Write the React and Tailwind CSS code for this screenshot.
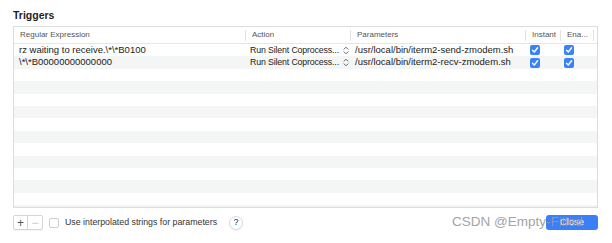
import React from 'react';

const cols = [
  { key: 'regex', label: 'Regular Expression', w: 'w-[232px]' },
  { key: 'action', label: 'Action', w: 'w-[105px]' },
  { key: 'params', label: 'Parameters', w: 'w-[175px]' },
  { key: 'instant', label: 'Instant', w: 'w-[35px]' },
  { key: 'enabled', label: 'Ena...', w: 'w-[33px]' },
];

const triggers = [
  {
    regex: 'rz waiting to receive.\\*\\*B0100',
    action: 'Run Silent Coprocess...',
    params: '/usr/local/bin/iterm2-send-zmodem.sh',
  },
  {
    regex: '\\*\\*B00000000000000',
    action: 'Run Silent Coprocess...',
    params: '/usr/local/bin/iterm2-recv-zmodem.sh',
  },
];

function Check() {
  return (
    <span className="w-[10px] h-[10px] rounded-[2px] bg-[#3a82f7] flex items-center justify-center">
      <svg width="8" height="8" viewBox="0 0 8 8" fill="none">
        <path d="M1.5 4.2 L3.3 6 L6.6 1.8" stroke="white" strokeWidth="1.4" strokeLinecap="round" strokeLinejoin="round" />
      </svg>
    </span>
  );
}

function Updown() {
  return (
    <svg width="6" height="9" viewBox="0 0 6 9" fill="none" className="shrink-0">
      <path d="M1 3.2 L3 1.2 L5 3.2 M1 5.8 L3 7.8 L5 5.8" stroke="#555" strokeWidth="0.9" strokeLinecap="round" strokeLinejoin="round" />
    </svg>
  );
}

export default function App() {
  const emptyRows = Array.from({ length: 12 });

  return (
    <div
      className="relative w-[612px] h-[243px] bg-white overflow-hidden text-[#222]"
      style={{ fontFamily: '"Liberation Sans", Arial, sans-serif' }}
    >
      <div className="pl-[13px] pr-[14px] pt-[9px]">
        <h2 className="text-[10.5px] font-bold leading-[12px] text-[#1e1e1e]">Triggers</h2>

        <div className="mt-[5px] h-[182px] border border-[#dcdcdc] overflow-hidden">
          {/* header */}
          <div className="flex h-[17px] border-b border-[#e6e6e6] text-[8px] text-[#555]">
            {cols.map((c) => (
              <div key={c.key} className={`${c.w} flex items-center justify-between pl-[6px] shrink-0`}>
                <span className="truncate">{c.label}</span>
                <span className="w-px h-[11px] bg-[#e2e2e2]" />
              </div>
            ))}
            <div className="flex-1" />
          </div>

          {/* rows */}
          {triggers.map((t, i) => (
            <div
              key={i}
              className={`flex h-[12.4px] items-center text-[9.5px] ${i % 2 === 1 ? 'bg-[#f4f5f5]' : ''}`}
            >
              <div className="w-[232px] pl-[5px] shrink-0 whitespace-nowrap">{t.regex}</div>
              <div className="w-[105px] pl-[4px] pr-[2px] shrink-0 flex items-center justify-between whitespace-nowrap">
                <span className="shrink-0 text-[8.8px] tracking-[-0.15px]">{t.action}</span>
                <Updown />
              </div>
              <div className="w-[175px] pl-[4px] shrink-0 whitespace-nowrap">{t.params}</div>
              <div className="w-[35px] pl-[4px] shrink-0 flex items-center">
                <Check />
              </div>
              <div className="w-[33px] pl-[3px] shrink-0 flex items-center">
                <Check />
              </div>
            </div>
          ))}
          {emptyRows.map((_, i) => (
            <div key={i} className={`h-[12.4px] ${i % 2 === 0 ? '' : 'bg-[#f4f5f5]'}`} />
          ))}
        </div>

        {/* bottom bar */}
        <div className="mt-[6px] flex items-center h-[17px]">
          <div className="flex h-[15px] border border-[#d4d4d4] rounded-[2px] shadow-[0_0.5px_0.5px_rgba(0,0,0,0.08)]">
            <span className="w-[14px] flex items-center justify-center text-[12px] leading-none text-[#555] border-r border-[#d4d4d4]">+</span>
            <span className="w-[14px] flex items-center justify-center text-[12px] leading-none text-[#c8c8c8]">−</span>
          </div>
          <span className="ml-[6px] w-[10px] h-[10px] border border-[#cfcfcf] rounded-[2px] bg-white" />
          <span className="ml-[6px] text-[8.8px] text-[#333] whitespace-nowrap">Use interpolated strings for parameters</span>
          <span className="ml-[12px] w-[14px] h-[14px] rounded-full border border-[#dadada] shadow-[0_0.5px_1px_rgba(0,0,0,0.12)] flex items-center justify-center text-[9px] text-[#333]">?</span>
          <div className="flex-1" />
          <span className="w-[52px] h-[15px] rounded-[3px] bg-[#3a7ff6] text-white text-[9.5px] flex items-center justify-center">Close</span>
        </div>
      </div>

      {/* watermark */}
      <span className="absolute left-[452px] top-[213px] text-[13.5px] leading-[17px] text-[#9a9a9a] opacity-90 whitespace-nowrap">
        CSDN @Empty-Filled
      </span>
    </div>
  );
}
